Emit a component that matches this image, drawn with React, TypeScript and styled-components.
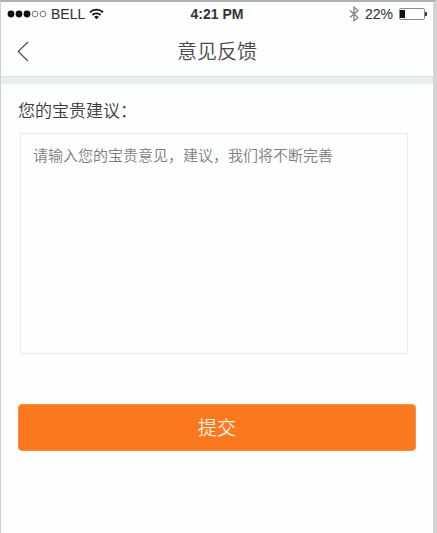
import React, { useState } from "react";
import styled, { createGlobalStyle } from "styled-components";

const GlobalStyle = createGlobalStyle`
  *, *::before, *::after { box-sizing: border-box; }
  body {
    margin: 0;
    background: #fdfefe;
    font-family: "Noto Sans CJK SC", sans-serif;
  }
`;

const Screen = styled.div`
  min-height: 100vh;
  display: flex;
  flex-direction: column;
  background: #fdfefe;
  border-style: solid;
  border-width: 2px 4px 0 1px;
  border-color: #b0b0b0 #d4d4d4 #d4d4d4 #cfcfcf;
`;

const StatusBar = styled.div`
  display: grid;
  grid-template-columns: 1fr auto 1fr;
  align-items: center;
  height: 24px;
  padding: 0 6px;
  font: 14px/24px "Liberation Sans", sans-serif;
  color: #2c2c2c;
`;

const StatusGroup = styled.div<{ $end?: boolean }>`
  display: flex;
  align-items: center;
  justify-content: ${(p) => (p.$end ? "flex-end" : "flex-start")};
  gap: ${(p) => (p.$end ? "6px" : "4px")};
`;

const Clock = styled.time`
  font-weight: 700;
  color: #333;
`;

const NavBar = styled.header`
  display: grid;
  grid-template-columns: 48px 1fr 48px;
  align-items: center;
  height: 50px;
`;

const BackButton = styled.button`
  display: flex;
  align-items: center;
  height: 48px;
  padding: 0 0 0 16px;
  border: 0;
  background: none;
  color: #444;
  cursor: pointer;
`;

const Title = styled.h1`
  margin: 0;
  font-size: 20px;
  line-height: 28px;
  font-weight: 350;
  text-align: center;
  color: #4a4a4a;
`;

const Divider = styled.div`
  height: 8px;
  border-top: 1px solid #dfe2e3;
  background: #e9eef2;
`;

const Form = styled.form`
  display: flex;
  flex-direction: column;
  padding: 14px 17px;
`;

const Label = styled.label`
  font-size: 17px;
  line-height: 24px;
  font-weight: 350;
  color: #3a3a3a;
`;

const TextBox = styled.textarea`
  height: 221px;
  margin: 11px 8px 50px 2px;
  padding: 10px 12px;
  border: 1px solid #e6ebeb;
  border-radius: 0;
  outline: none;
  resize: none;
  background: transparent;
  font: 350 15px/22px "Noto Sans CJK SC", sans-serif;
  color: #333;

  &::placeholder {
    color: #7d7d7d;
    opacity: 1;
  }
`;

const SubmitButton = styled.button`
  height: 47px;
  padding: 0 0 2px;
  border: 1px solid #fb8d3f;
  border-radius: 4px;
  background: #fa781e;
  font: 350 19px/28px "Noto Sans CJK SC", sans-serif;
  color: #fff0e6;
  cursor: pointer;
`;

function SignalIcon() {
  return (
    <svg width="40" height="8" viewBox="0 0 40 8" aria-hidden="true">
      {[0, 1, 2, 3, 4].map((i) => (
        <circle
          key={i}
          cx={4 + i * 8}
          cy="4"
          r={i < 3 ? 3.4 : 2.9}
          fill={i < 3 ? "#111" : "none"}
          stroke={i < 3 ? "none" : "#555"}
          strokeWidth="0.8"
        />
      ))}
    </svg>
  );
}

function WifiIcon() {
  return (
    <svg width="15" height="12" viewBox="0 0 15 12" fill="none" stroke="#111" strokeWidth="1.8" aria-hidden="true">
      <path d="M1 4.3a9.2 9.2 0 0 1 13 0" />
      <path d="M3.4 7a5.8 5.8 0 0 1 8.2 0" />
      <path d="M7.5 11.2 5.2 8.9a3.3 3.3 0 0 1 4.6 0z" fill="#111" stroke="none" />
    </svg>
  );
}

function BluetoothIcon() {
  return (
    <svg width="10" height="16" viewBox="0 0 10 16" fill="none" stroke="#8b8b8b" strokeWidth="1.4" aria-hidden="true">
      <path d="M1 4.5l8 7-4 3.3V1.2l4 3.3-8 7" />
    </svg>
  );
}

function BatteryIcon() {
  return (
    <svg width="28" height="12" viewBox="0 0 28 12" aria-hidden="true">
      <rect x="0.5" y="0.5" width="25" height="11" rx="1.5" fill="none" stroke="#8a8a8a" />
      <rect x="1" y="2" width="5" height="8" fill="#111" />
      <path d="M26 4h.6a2 2 0 0 1 0 4H26z" fill="#333" />
    </svg>
  );
}

function BackIcon() {
  return (
    <svg width="12" height="21" viewBox="0 0 12 21" fill="none" stroke="currentColor" strokeWidth="1.1" aria-hidden="true">
      <path d="M11 1 1.2 10.5 11 20" />
    </svg>
  );
}

export default function App() {
  const [text, setText] = useState("");

  return (
    <>
      <GlobalStyle />
      <Screen lang="zh-CN">
        <StatusBar>
          <StatusGroup>
            <SignalIcon />
            <span>BELL</span>
            <WifiIcon />
          </StatusGroup>
          <Clock>4:21 PM</Clock>
          <StatusGroup $end>
            <BluetoothIcon />
            <span>22%</span>
            <BatteryIcon />
          </StatusGroup>
        </StatusBar>
        <NavBar>
          <BackButton type="button" aria-label="返回">
            <BackIcon />
          </BackButton>
          <Title>意见反馈</Title>
        </NavBar>
        <Divider />
        <Form onSubmit={(e) => e.preventDefault()}>
          <Label htmlFor="suggestion">您的宝贵建议：</Label>
          <TextBox
            id="suggestion"
            value={text}
            onChange={(e) => setText(e.target.value)}
            placeholder="请输入您的宝贵意见，建议，我们将不断完善"
          />
          <SubmitButton type="submit">提交</SubmitButton>
        </Form>
      </Screen>
    </>
  );
}
